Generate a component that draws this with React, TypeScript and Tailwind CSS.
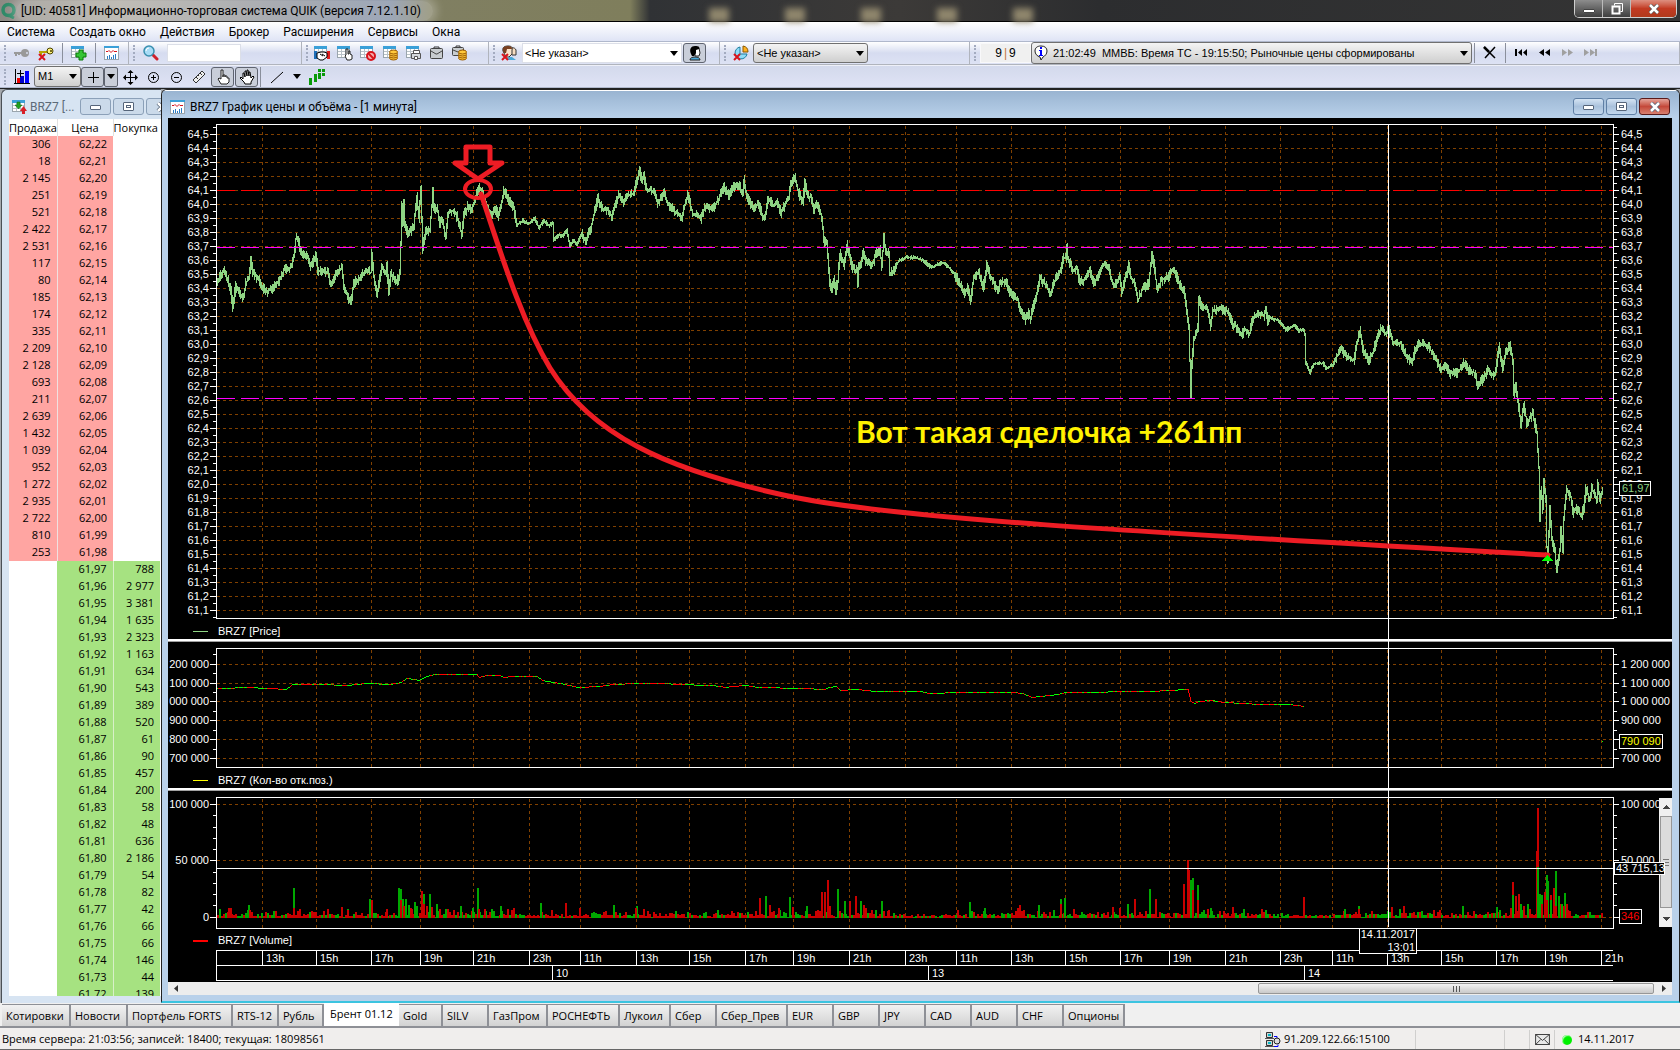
import React, { useState } from "react";

type Point = [number, number];

//market depth
const ASKS = [
  ["306", "62,22"], ["18", "62,21"], ["2 145", "62,20"], ["251", "62,19"], ["521", "62,18"],
  ["2 422", "62,17"], ["2 531", "62,16"], ["117", "62,15"], ["80", "62,14"], ["185", "62,13"],
  ["174", "62,12"], ["335", "62,11"], ["2 209", "62,10"], ["2 128", "62,09"], ["693", "62,08"],
  ["211", "62,07"], ["2 639", "62,06"], ["1 432", "62,05"], ["1 039", "62,04"], ["952", "62,03"],
  ["1 272", "62,02"], ["2 935", "62,01"], ["2 722", "62,00"], ["810", "61,99"], ["253", "61,98"],
];

const BIDS = [
  ["61,97", "788"], ["61,96", "2 977"], ["61,95", "3 381"], ["61,94", "1 635"], ["61,93", "2 323"],
  ["61,92", "1 163"], ["61,91", "634"], ["61,90", "543"], ["61,89", "389"], ["61,88", "520"],
  ["61,87", "61"], ["61,86", "90"], ["61,85", "457"], ["61,84", "200"], ["61,83", "58"],
  ["61,82", "48"], ["61,81", "636"], ["61,80", "2 186"], ["61,79", "54"], ["61,78", "82"],
  ["61,77", "42"], ["61,76", "66"], ["61,75", "66"], ["61,74", "146"], ["61,73", "44"],
  ["61,72", "139"],
];

const MENU = ["Система", "Создать окно", "Действия", "Брокер", "Расширения", "Сервисы", "Окна"];

const TABS = [
  { name: "Котировки", width: "w-[69px]" },
  { name: "Новости", width: "w-[57px]" },
  { name: "Портфель FORTS", width: "w-[105px]" },
  { name: "RTS-12", width: "w-[46px]" },
  { name: "Рубль", width: "w-[45px]" },
  { name: "Брент 01.12", width: "w-[75px]" },
  { name: "Gold", width: "w-[44px]" },
  { name: "SILV", width: "w-[46px]" },
  { name: "ГазПром", width: "w-[59px]" },
  { name: "РОСНЕФТЬ", width: "w-[72px]" },
  { name: "Лукоил", width: "w-[51px]" },
  { name: "Сбер", width: "w-[46px]" },
  { name: "Сбер_Прев", width: "w-[71px]" },
  { name: "EUR", width: "w-[46px]" },
  { name: "GBP", width: "w-[46px]" },
  { name: "JPY", width: "w-[46px]" },
  { name: "CAD", width: "w-[46px]" },
  { name: "AUD", width: "w-[46px]" },
  { name: "CHF", width: "w-[46px]" },
  { name: "Опционы", width: "w-[61px]" },
];

//hour marks on the time axis
const HOURS: [number, string][] = [
  [262, "13h"], [316, "15h"], [371, "17h"], [420, "19h"], [473, "21h"], [529, "23h"],
  [580, "11h"], [636, "13h"], [689, "15h"], [745, "17h"], [793, "19h"], [849, "21h"], [905, "23h"],
  [956, "11h"], [1011, "13h"], [1065, "15h"], [1120, "17h"], [1169, "19h"], [1225, "21h"], [1280, "23h"],
  [1332, "11h"], [1387, "13h"], [1441, "15h"], [1496, "17h"], [1545, "19h"], [1601, "21h"],
];

const DAYS: [number, string][] = [[552, "10"], [928, "13"], [1304, "14"]];

const PRICE: Point[] = [
  [217, 282], [220, 273], [223, 270], [227, 280], [230, 290], [232, 307], [235, 285], [239, 292], [242, 298],
  [245, 283], [248, 277], [250, 260], [252, 273], [257, 278], [262, 288], [267, 291], [273, 287], [280, 277],
  [283, 270], [290, 267], [293, 257], [295, 238], [297, 238], [300, 252], [307, 257], [310, 265], [315, 255],
  [317, 270], [327, 272], [330, 285], [333, 278], [337, 270], [341, 268], [343, 287], [350, 302], [353, 282],
  [360, 277], [365, 270], [370, 272], [371, 253], [373, 277], [376, 295], [378, 283], [381, 268], [385, 273],
  [386, 263], [388, 293], [390, 273], [396, 282], [399, 273], [400, 243], [401, 205], [402, 223], [403, 204],
  [404, 223], [407, 235], [413, 225], [416, 195], [418, 218], [420, 186], [421, 220], [422, 248], [425, 230],
  [429, 230], [432, 191], [433, 207], [437, 210], [439, 225], [441, 218], [445, 238], [447, 213], [453, 210],
  [457, 218], [461, 235], [463, 215], [467, 206], [470, 210], [474, 200], [478, 186], [482, 193], [485, 203],
  [490, 218], [495, 207], [497, 216], [500, 207], [503, 189], [505, 193], [510, 203], [513, 207], [516, 225],
  [522, 220], [528, 223], [534, 218], [538, 227], [543, 220], [548, 225], [552, 223], [553, 240], [557, 235],
  [562, 235], [566, 230], [569, 245], [573, 240], [576, 244], [581, 232], [585, 242], [590, 227], [597, 198],
  [602, 210], [607, 208], [611, 216], [615, 203], [618, 195], [623, 202], [627, 195], [633, 193], [636, 180],
  [639, 171], [641, 180], [643, 175], [646, 190], [653, 190], [657, 202], [663, 193], [667, 203], [673, 210],
  [681, 217], [684, 205], [687, 195], [692, 213], [700, 218], [704, 207], [712, 208], [718, 198], [723, 187],
  [728, 195], [732, 187], [738, 185], [742, 193], [743, 179], [744, 188], [748, 200], [753, 208], [758, 203],
  [762, 217], [764, 218], [767, 197], [772, 205], [777, 202], [780, 213], [785, 202], [788, 197], [790, 182],
  [794, 177], [797, 190], [802, 203], [804, 183], [807, 195], [810, 197], [813, 210], [817, 203], [821, 217],
  [823, 240], [826, 243], [827, 257], [829, 283], [831, 288], [833, 280], [835, 290], [837, 280], [839, 253],
  [843, 265], [846, 245], [848, 252], [852, 268], [856, 270], [857, 285], [858, 265], [861, 260], [862, 250],
  [865, 260], [870, 265], [873, 260], [875, 252], [879, 250], [881, 265], [883, 236], [885, 253], [888, 253],
  [889, 273], [893, 270], [898, 260], [905, 257], [913, 257], [923, 260], [930, 267], [942, 262], [948, 267],
  [953, 273], [957, 280], [963, 292], [967, 287], [970, 300], [973, 275], [978, 273], [983, 287], [985, 273],
  [986, 263], [988, 272], [993, 283], [997, 290], [999, 282], [1005, 280], [1008, 290], [1017, 300], [1020, 312],
  [1024, 319], [1027, 313], [1030, 318], [1032, 307], [1037, 290], [1039, 277], [1043, 282], [1050, 293],
  [1055, 278], [1060, 270], [1062, 258], [1065, 257], [1066, 247], [1067, 257], [1072, 270], [1076, 267],
  [1079, 282], [1085, 278], [1089, 270], [1093, 282], [1098, 275], [1102, 265], [1107, 265], [1110, 277],
  [1113, 287], [1119, 275], [1121, 291], [1124, 280], [1128, 265], [1130, 277], [1134, 283], [1137, 300],
  [1142, 288], [1148, 283], [1151, 253], [1153, 263], [1156, 287], [1161, 280], [1168, 275], [1173, 268],
  [1178, 283], [1183, 290], [1186, 310], [1188, 327], [1190, 394], [1191, 363], [1193, 340], [1197, 327],
  [1198, 300], [1202, 307], [1206, 308], [1210, 325], [1212, 310], [1218, 308], [1228, 312], [1231, 323],
  [1237, 328], [1241, 335], [1244, 328], [1249, 333], [1251, 320], [1257, 313], [1263, 315], [1265, 307],
  [1267, 322], [1269, 317], [1279, 321], [1285, 329], [1294, 325], [1298, 330], [1303, 329], [1304, 333],
  [1305, 362], [1309, 372], [1313, 363], [1322, 363], [1326, 368], [1333, 363], [1340, 347], [1345, 355],
  [1353, 360], [1356, 343], [1359, 330], [1362, 350], [1368, 360], [1373, 350], [1376, 337], [1380, 328],
  [1385, 333], [1388, 328], [1392, 343], [1400, 343], [1405, 355], [1411, 363], [1415, 347], [1419, 343],
  [1427, 345], [1433, 355], [1440, 368], [1444, 365], [1449, 373], [1457, 372], [1463, 363], [1470, 372],
  [1474, 372], [1477, 385], [1481, 380], [1487, 370], [1494, 375], [1498, 347], [1502, 367], [1505, 352],
  [1509, 344], [1512, 360], [1513, 395], [1515, 382], [1517, 400], [1520, 423], [1523, 405], [1526, 422],
  [1529, 418], [1532, 413], [1536, 433], [1538, 467], [1539, 520], [1540, 490], [1542, 508], [1543, 480],
  [1545, 500], [1546, 547], [1547, 560], [1549, 508], [1551, 540], [1554, 550], [1556, 570], [1559, 550],
  [1560, 530], [1562, 550], [1563, 517], [1566, 490], [1570, 497], [1572, 513], [1575, 508], [1581, 515],
  [1583, 507], [1585, 488], [1589, 500], [1591, 488], [1596, 498], [1597, 484], [1599, 499], [1602, 490],
];

const OPEN_INTEREST: Point[] = [
  [217, 688], [223, 688], [247, 687], [268, 688], [287, 689], [293, 684], [320, 684], [347, 685], [367, 683],
  [390, 684], [402, 682], [407, 678], [420, 680], [427, 676], [435, 674], [477, 674], [479, 677], [487, 675],
  [500, 675], [503, 677], [513, 676], [537, 676], [542, 680], [553, 682], [560, 683], [578, 687], [600, 686],
  [614, 684], [637, 683], [664, 683], [678, 684], [710, 685], [722, 686], [724, 687], [745, 685], [758, 687],
  [802, 688], [825, 689], [830, 687], [836, 686], [840, 690], [857, 689], [875, 691], [921, 691], [928, 693],
  [963, 692], [1013, 692], [1022, 693], [1032, 697], [1059, 694], [1066, 692], [1151, 691], [1188, 689],
  [1191, 701], [1195, 703], [1199, 701], [1211, 700], [1224, 702], [1243, 703], [1261, 704], [1289, 704],
  [1304, 706],
];

//x, height, color
const SPIKES: [number, number, "r" | "g"][] = [
  [220, 9, "g"], [229, 10, "r"], [231, 10, "r"], [249, 13, "g"], [250, 8, "r"], [294, 30, "g"], [294, 10, "r"],
  [300, 9, "r"], [328, 9, "r"], [342, 11, "r"], [348, 8, "r"], [370, 19, "g"], [372, 18, "r"], [387, 9, "r"],
  [399, 30, "g"], [401, 29, "g"], [401, 18, "r"], [403, 19, "g"], [404, 12, "r"], [406, 19, "g"], [409, 13, "g"],
  [411, 10, "r"], [415, 16, "g"], [417, 12, "g"], [422, 27, "r"], [424, 24, "g"], [424, 14, "r"], [427, 12, "r"],
  [430, 24, "g"], [432, 11, "r"], [437, 14, "g"], [440, 9, "r"], [461, 12, "g"], [473, 10, "g"], [478, 30, "g"],
  [479, 9, "r"], [485, 9, "r"], [501, 12, "g"], [514, 10, "r"], [541, 15, "g"], [566, 15, "r"], [552, 8, "r"],
  [580, 10, "r"], [614, 13, "g"], [637, 12, "g"], [636, 10, "r"], [760, 20, "r"], [766, 22, "g"], [770, 13, "r"],
  [779, 10, "r"], [790, 21, "g"], [793, 11, "r"], [807, 12, "g"], [822, 26, "r"], [825, 26, "r"], [828, 38, "r"],
  [830, 12, "r"], [838, 29, "g"], [845, 17, "g"], [850, 17, "r"], [856, 22, "r"], [861, 17, "g"], [864, 13, "r"],
  [882, 17, "g"], [889, 8, "r"], [970, 16, "g"], [985, 10, "g"], [1018, 10, "r"], [1020, 13, "r"], [1039, 13, "g"],
  [1061, 19, "g"], [1061, 14, "r"], [1065, 20, "g"], [1113, 11, "r"], [1120, 10, "r"], [1128, 14, "g"],
  [1135, 19, "r"], [1150, 29, "g"], [1156, 19, "r"], [1184, 34, "r"], [1188, 58, "r"], [1189, 48, "r"],
  [1191, 38, "g"], [1193, 40, "g"], [1193, 28, "r"], [1198, 33, "g"], [1198, 18, "r"], [1204, 8, "g"],
  [1211, 10, "g"], [1233, 11, "r"], [1266, 8, "g"], [1304, 21, "r"], [1345, 9, "g"], [1359, 12, "g"],
  [1359, 9, "r"], [1392, 11, "r"], [1404, 12, "r"], [1438, 6, "r"], [1463, 12, "g"], [1497, 11, "g"],
  [1511, 10, "r"], [1513, 36, "r"], [1513, 23, "g"], [1516, 22, "r"], [1519, 24, "r"], [1521, 14, "g"],
  [1524, 12, "r"], [1528, 14, "g"], [1537, 67, "r"], [1538, 110, "r"], [1538, 51, "g"], [1540, 24, "g"],
  [1542, 23, "g"], [1542, 14, "r"], [1545, 26, "r"], [1547, 43, "g"], [1548, 37, "g"], [1547, 18, "r"],
  [1551, 23, "r"], [1551, 18, "g"], [1554, 30, "r"], [1556, 47, "g"], [1556, 12, "r"], [1559, 22, "g"],
  [1561, 14, "r"], [1562, 14, "g"], [1565, 25, "g"], [1567, 14, "r"], [1564, 12, "r"],
];

const makeRandom = (seed: number) => () => {
  seed = (seed * 1103515245 + 12345) % 2147483648;
  return seed / 2147483648;
};

const valueAt = (points: Point[], x: number) => {
  for (let i = 1; i < points.length; i++) {
    const [x0, y0] = points[i - 1];
    const [x1, y1] = points[i];
    if (x <= x1) return y0 + ((y1 - y0) * (x - x0)) / (x1 - x0);
  }
  return points[points.length - 1][1];
};

//evening sessions trade in a narrow range
const isCalm = (x: number) =>
  (x > 515 && x < 582) || (x > 897 && x < 955) || (x > 1268 && x < 1334);

const buildPricePath = () => {
  const rnd = makeRandom(17);
  let d = "";
  let prev = valueAt(PRICE, 217);
  for (let x = 217; x <= 1602; x++) {
    const y = valueAt(PRICE, x);
    const amp = isCalm(x) ? 2 : 5;
    const top = Math.round(Math.min(y, prev) - rnd() * amp);
    const bottom = Math.round(Math.max(y, prev) + rnd() * amp);
    d += `M${x} ${top}h1V${bottom + 1}h-1z`;
    prev = y;
  }
  return d;
};

const buildOpenInterest = () => {
  const rnd = makeRandom(5);
  let green = "";
  let red = "";
  let isRed = false;
  for (let x = 217; x < 1304; x++) {
    if (rnd() < 0.3) isRed = !isRed;
    const y = Math.round(valueAt(OPEN_INTEREST, x));
    const next = Math.round(valueAt(OPEN_INTEREST, x + 1));
    const cell = `M${x} ${Math.min(y, next)}h1v${Math.max(1, Math.abs(next - y))}h-1z`;
    if (isRed || next - y > 1) red += cell;
    else green += cell;
  }
  return { green, red };
};

const buildVolume = () => {
  const rnd = makeRandom(91);
  let green = "";
  let red = "";
  for (let x = 217; x < 1602; x += 2) {
    const max = isCalm(x) ? 3 : 8;
    const h = 1 + Math.round(rnd() * rnd() * max + rnd() * 2);
    const cell = `M${x} ${918 - h}h2v${h}h-2z`;
    if (rnd() > 0.42) red += cell;
    else green += cell;
  }
  return { green, red };
};

const PRICE_PATH = buildPricePath();
const OI_PATHS = buildOpenInterest();
const VOLUME_PATHS = buildVolume();

const range = (n: number) => Array.from({ length: n }, (_, i) => i);

const PRICE_LEVELS = range(35).map((i) => ({
  y: 134 + i * 14,
  label: ((645 - i) / 10).toFixed(1).replace(".", ","),
}));

const OI_LEVELS = [
  { y: 664, left: "200 000", right: "1 200 000" },
  { y: 683, left: "100 000", right: "1 100 000" },
  { y: 701, left: "000 000", right: "1 000 000" },
  { y: 720, left: "900 000", right: "900 000" },
  { y: 739, left: "800 000", right: "" },
  { y: 758, left: "700 000", right: "700 000" },
];

const VOLUME_LEVELS = [
  { y: 804, left: "100 000", right: "100 000" },
  { y: 860, left: "50 000", right: "50 000" },
  { y: 917, left: "0", right: "" },
];

const MINOR_TICKS = [
  ...range(36).map((i) => 127 + i * 14),
  654, 673, 692, 711, 730, 749,
  815, 827, 838, 849, 872, 883, 894, 905,
];

const PANELS = [
  { top: 124, bottom: 618 },
  { top: 648, bottom: 767 },
  { top: 797, bottom: 928 },
];

const Legend = ({ y, color, text, thick }: { y: number; color: string; text: string; thick?: boolean }) => (
  <g>
    <rect x={193} y={y} width={15} height={thick ? 2 : 1} fill={color} />
    <text x={218} y={y + 4} fill="#fff">{text}</text>
  </g>
);

const Chart = () => (
  <svg
    className="block h-full w-full bg-black text-[11px]"
    viewBox="168 118 1504 864"
    shapeRendering="crispEdges"
    fontFamily="'Liberation Sans', Arial, sans-serif"
    role="img"
    aria-label="BRZ7 График цены и объёма"
  >
    {/* grid */}
    <g stroke="#804000" strokeDasharray="3 3">
      {[...PRICE_LEVELS, ...OI_LEVELS, ...VOLUME_LEVELS].map(({ y }) => (
        <line key={y} x1={217} x2={1613} y1={y + 0.5} y2={y + 0.5} />
      ))}
      {HOURS.map(([x]) =>
        PANELS.map(({ top, bottom }) => (
          <line key={`${x}-${top}`} x1={x + 0.5} x2={x + 0.5} y1={top + 2} y2={bottom} />
        ))
      )}
    </g>

    {/* levels */}
    <path d="M217 190.5H1613" stroke="#f00" strokeDasharray="18 6" />
    <path d={PRICE_PATH} fill="#8fd584" />
    <path d="M217 247.5H1613M217 398.5H1613" stroke="#f0f" strokeDasharray="18 6" />

    <path d={OI_PATHS.green} fill="#0f0" />
    <path d={OI_PATHS.red} fill="#f00" />
    <rect x={1602} y={741} width={1} height={1} fill="#0f0" />

    <path d={VOLUME_PATHS.green} fill="#00a800" />
    <path d={VOLUME_PATHS.red} fill="#c80000" />
    {SPIKES.map(([x, h, c], i) => (
      <rect key={i} x={x - 1} y={918 - h} width={2} height={h} fill={c === "r" ? "#c80000" : "#00a800"} />
    ))}

    {/* frames and ticks */}
    <g stroke="#fff" fill="none">
      {PANELS.map(({ top, bottom }) => (
        <rect key={top} x={216.5} y={top + 0.5} width={1397} height={bottom - top} />
      ))}
      {[...PRICE_LEVELS, ...OI_LEVELS, ...VOLUME_LEVELS].map(({ y }) => (
        <path key={y} d={`M210 ${y + 0.5}h6M1614 ${y + 0.5}h5`} />
      ))}
      {MINOR_TICKS.map((y) => (
        <path key={y} d={`M213 ${y + 0.5}h3M1614 ${y + 0.5}h3`} />
      ))}
      <path d="M216.5 950V980.5M216 950.5H1613M216 965.5H1613M216 980.5H1613" />
      {HOURS.map(([x]) => (
        <path key={x} d={`M${x + 0.5} 950v15`} />
      ))}
      {DAYS.map(([x]) => (
        <path key={x} d={`M${x + 0.5} 965v15`} />
      ))}
    </g>

    {/* axis labels */}
    <g fill="#fff">
      {PRICE_LEVELS.map(({ y, label }) => (
        <React.Fragment key={y}>
          <text x={209} y={y + 4} textAnchor="end">{label}</text>
          <text x={1621} y={y + 4}>{label}</text>
        </React.Fragment>
      ))}
      {[...OI_LEVELS, ...VOLUME_LEVELS].map(({ y, left, right }) => (
        <React.Fragment key={y}>
          <text x={209} y={y + 4} textAnchor="end">{left}</text>
          {right && <text x={1621} y={y + 4}>{right}</text>}
        </React.Fragment>
      ))}
      {HOURS.map(([x, label]) => (
        <text key={x} x={x + 4} y={962}>{label}</text>
      ))}
      {DAYS.map(([x, label]) => (
        <text key={x} x={x + 4} y={977}>{label}</text>
      ))}
    </g>

    <Legend y={631} color="#8fd584" text="BRZ7 [Price]" />
    <Legend y={780} color="#ff0" text="BRZ7 (Кол-во отк.поз.)" />
    <Legend y={940} color="#f00" text="BRZ7 [Volume]" thick />

    {/* panel splitters */}
    {[639, 788].map((y) => (
      <g key={y}>
        <rect x={168} y={y} width={1504} height={2} fill="#fff" />
        <rect x={168} y={y + 2} width={1504} height={1} fill="#a0a0a0" />
      </g>
    ))}

    {/* vertical scrollbar of the volume panel */}
    <g>
      <rect x={1659} y={798} width={13} height={129} fill="#f0f0f0" />
      <rect x={1660.5} y={816.5} width={11} height={91} fill="#dcdcdc" stroke="#979797" />
      <path d="M1662 809l4-4 4 4zM1662 917l4 4 4-4z" fill="#444" />
      <path d="M1663 859.5h6M1663 862.5h6M1663 865.5h6" stroke="#777" />
    </g>

    {/* crosshair */}
    <path d="M1388.5 125V927M216 868.5H1613" stroke="#fff" />
    <g fill="#000" stroke="#fff">
      <rect x={1359.5} y={928.5} width={57} height={25} />
      <rect x={1614.5} y={862.5} width={50} height={12} />
      <rect x={1619.5} y={481.5} width={31} height={14} />
      <rect x={1619.5} y={734.5} width={43} height={14} />
      <rect x={1619.5} y={909.5} width={22} height={14} />
    </g>
    <g fill="#fff">
      <text x={1415} y={938} textAnchor="end">14.11.2017</text>
      <text x={1415} y={951} textAnchor="end">13:01</text>
      <text x={1616} y={872}>43 715,13</text>
      <text x={1622} y={492} fill="#8fd584">61,97</text>
      <text x={1621} y={745} fill="#ff0">790 090</text>
      <text x={1621} y={920} fill="#f00">346</text>
    </g>

    {/* deal notes */}
    <g fill="none" stroke="#ed1c24" shapeRendering="auto">
      <path
        d="M466 147H490V163H502L478 179L455 163H466Z"
        strokeWidth={5}
        strokeLinejoin="round"
      />
      <ellipse cx={478} cy={189} rx={13} ry={9} strokeWidth={4} />
      <path
        d="M481 194C500 250 520 318 550 368C590 432 660 470 798 498C900 518 1100 530 1548 555"
        strokeWidth={5}
        strokeLinecap="round"
      />
    </g>
    <path d="M1541 561L1547 555L1554 561Z" fill="#0f0" />
    <text
      x={856}
      y={443}
      fill="#fff200"
      className="text-[30px] font-bold"
      fontFamily="Lato, 'Open Sans', sans-serif"
    >
      Вот такая сделочка +261пп
    </text>
  </svg>
);

//toolbar icons
const Icon = ({ children, size = 16 }: { children: React.ReactNode; size?: number }) => (
  <svg width={size} height={size} viewBox="0 0 16 16" className="block shrink-0" aria-hidden="true">
    {children}
  </svg>
);

const TableSheet = () => (
  <g>
    <rect x="0.5" y="1.5" width="12" height="11" fill="#fff" stroke="#9aa5ad" />
    <path d="M0 1h13v3H0z" fill="#3aa0d8" />
    <path d="M1 6.5h11M1 9.5h11M4.5 4v8M8.5 4v8" stroke="#b9c2c8" />
  </g>
);

const RedCross = () => <path d="M1 9l6 6M7 9l-6 6" stroke="#d8141c" strokeWidth="2" />;

const KeyIcon = ({ off }: { off?: boolean }) => (
  <Icon>
    <path
      d={off ? "M8 8H0M2 8v3M5 8v2" : "M9 7H1M3 8v2"}
      stroke={off ? "#999" : "#b8a400"}
      strokeWidth="2"
      fill="none"
    />
    {off ? (
      <circle cx="11" cy="8" r="4" fill="#999" />
    ) : (
      <circle cx="12" cy="6" r="3" fill="#fff27a" stroke="#4b4200" />
    )}
    <circle cx="13" cy={off ? 8 : 6} r="1" fill={off ? "#d8dcec" : "#4b4200"} />
    {!off && <RedCross />}
  </Icon>
);

const ChartIcon = () => (
  <Icon>
    <rect x="0.5" y="1.5" width="14" height="13" fill="#fff" stroke="#9aa5ad" />
    <path d="M0 1h15v2H0z" fill="#3aa0d8" />
    <path d="M2 6.5h2l1-1 2 2 2-2 1 1h3" stroke="#d8141c" fill="none" />
    <path d="M3.5 14v-3M5.5 14v-4M7.5 14v-2M9.5 14v-4M11.5 14v-5" stroke="#2b7cc4" />
  </Icon>
);

const AddTableIcon = () => (
  <Icon>
    <TableSheet />
    <path d="M8 5h4v3h3v4h-3v3H8v-3H5V8h3z" fill="#35c435" stroke="#0b7a0b" />
  </Icon>
);

const SearchIcon = () => (
  <Icon>
    <path d="M10 10l4 4" stroke="#d0202a" strokeWidth="3" strokeLinecap="round" />
    <circle cx="6" cy="6" r="5" fill="#a8dcf6" stroke="#3a8fae" strokeWidth="1.5" />
    <path d="M3 6a3 3 0 0 1 3-3" stroke="#fff" fill="none" />
  </Icon>
);

const DealIcon = () => (
  <Icon>
    <TableSheet />
    <path d="M0 6h3v8H0z" fill="#1f6fb8" />
    <path d="M13 6h3v8h-3z" fill="#e02020" />
    <path d="M3 8l4-1 3 0 3 1v4l-4 3-3 0-3-2z" fill="#fff" stroke="#000" />
    <path d="M6 9l3 2M8 9l3 2" stroke="#000" />
  </Icon>
);

const HandTableIcon = () => (
  <Icon>
    <TableSheet />
    <path d="M8 11l1-1V4h2v5h1V6h1v3l2 1v4l-2 1h-3z" fill="#fff" stroke="#222" strokeLinejoin="round" />
  </Icon>
);

const StopTableIcon = () => (
  <Icon>
    <TableSheet />
    <circle cx="11" cy="11" r="4" fill="#f4b0b0" stroke="#d8141c" strokeWidth="2" />
    <path d="M8 8l6 6" stroke="#d8141c" strokeWidth="2" />
  </Icon>
);

const Coins = () => (
  <g fill="#ffc83a" stroke="#9a5a00">
    <ellipse cx="10.5" cy="13" rx="4" ry="2" />
    <ellipse cx="10.5" cy="11" rx="4" ry="2" />
    <ellipse cx="10.5" cy="9" rx="4" ry="2" />
    <ellipse cx="10.5" cy="7" rx="4" ry="2" />
  </g>
);

const CoinTableIcon = () => (
  <Icon>
    <TableSheet />
    <Coins />
  </Icon>
);

const PrintTableIcon = () => (
  <Icon>
    <TableSheet />
    <path d="M7.5 5.5h6v4h-6z" fill="#fff" stroke="#555" />
    <path d="M5.5 8.5h9v5h-9z" fill="#d5d9dc" stroke="#555" />
    <path d="M8.5 11.5h3v3h-3z" fill="#fff" stroke="#555" />
  </Icon>
);

const BriefcaseIcon = () => (
  <Icon>
    <path d="M5 4V2h5v2" stroke="#333" fill="none" />
    <rect x="1.5" y="3.5" width="12" height="10" rx="1" fill="#c8cccf" stroke="#444" />
    <path d="M2 6l5 3h1l5-3" stroke="#444" fill="none" />
  </Icon>
);

const CoinBriefcaseIcon = () => (
  <Icon>
    <path d="M4 2V1h4v1" stroke="#333" fill="none" />
    <rect x="0.5" y="2.5" width="11" height="8" rx="1" fill="#c8cccf" stroke="#444" />
    <path d="M1 5l5 2 5-2" stroke="#444" fill="none" />
    <Coins />
  </Icon>
);

const ClientsIcon = () => (
  <Icon>
    <path d="M9 5c0-3 5-3 6 0v5h-4z" fill="#f7dcc0" stroke="#333" />
    <path d="M2 6c-1-4 2-5 5-5s5 1 4 4v4l-3 3H5z" fill="#fbe3cb" stroke="#333" />
    <path d="M2 6c-1-4 2-5 5-5s4 1 4 3H6L5 8H3z" fill="#7a4020" />
    <path d="M6 15l2-3h3l4 3z" fill="#4aa8d8" />
    <RedCross />
  </Icon>
);

const HeadIcon = () => (
  <Icon>
    <path d="M8 3h4l1 5-1 3H8z" fill="#fff" stroke="#222" />
    <path d="M4 9C2 4 4 1 8 1s5 1 4 3L9 5v3l-2 3H5z" fill="#000" />
    <path d="M3 15c0-2 2-3 5-3s5 1 5 3z" fill="#4aa8d8" stroke="#222" />
  </Icon>
);

const PieIcon = () => (
  <Icon>
    <path d="M7 2a6 6 0 1 0 7 7H7z" fill="#8fdcf8" stroke="#1f7f9f" />
    <path d="M10 1a6 6 0 0 1 5 6h-5z" fill="#ffb020" stroke="#8a5a00" />
    <RedCross />
  </Icon>
);

const InfoIcon = () => (
  <Icon>
    <path d="M8 1c4 0 6 2 6 5s-2 5-4 6l-2 3-1-3C4 11 2 9 2 6s2-5 6-5z" fill="#fff" stroke="#222" />
    <path d="M7 2h2v2H7zM6 5h3v5h1v1H6v-1h1V6H6z" fill="#00f" />
  </Icon>
);

const HandIcon = ({ open }: { open?: boolean }) => (
  <Icon>
    {open ? (
      <path
        d="M4 10V4h1l1 4V2h1l1 5V1h1l1 6V3h1l1 6 2-2 1 1-3 5v2H6l-1-2-4-4 1-1z"
        fill="#fff" stroke="#000" strokeLinejoin="round"
      />
    ) : (
      <path
        d="M6 10V1h2v7V6h2v2V7h2v2h2v4l-2 2H6L3 10l1-1z"
        fill="#fff" stroke="#222" strokeLinejoin="round"
      />
    )}
  </Icon>
);

const DepthIcon = () => (
  <Icon>
    <TableSheet />
    <path d="M5 3h3v3h2l-3.5 4L3 6h2z" fill="#20a020" stroke="#0b6a0b" strokeWidth="0.5" />
    <path d="M10 15v-3H8l3.5-5 3.5 5h-2v3z" fill="#d82028" />
  </Icon>
);

const Caret = () => (
  <svg width="8" height="5" viewBox="0 0 8 5" className="block" aria-hidden="true">
    <path d="M0 0h8L4 5z" fill="#000" />
  </svg>
);

const Grip = () => <span className="h-4 w-[2px] border-l-2 border-dotted border-[#a3abc0]" />;
const Divider = () => <span className="h-5 w-px bg-[#8a8f9c]" />;

const ToolButton = ({ label, children, pressed }: { label: string; children: React.ReactNode; pressed?: boolean }) => (
  <button
    aria-label={label}
    className={
      pressed
        ? "flex h-5 w-[23px] items-center justify-center rounded-[3px] border border-[#5f6470] bg-[#c9ced9]"
        : "flex h-5 w-4 items-center justify-center"
    }
  >
    {children}
  </button>
);

const Band = ({ className, children }: { className: string; children: React.ReactNode }) => (
  <div
    className={`flex h-[23px] shrink-0 items-center border-r border-b border-[#b0b4bd] bg-gradient-to-b from-white via-[#d6dcf0] to-[#dde2f4] pl-1 ${className}`}
  >
    {children}
  </div>
);

const Combo = ({ label, value, className }: { label: string; value: string; className: string }) => (
  <div className="relative flex shrink-0 items-center">
    <select aria-label={label} className={`appearance-none font-[Liberation_Sans,Arial,sans-serif] text-[11px] text-black ${className}`}>
      <option>{value}</option>
    </select>
    <span className="pointer-events-none absolute right-1">
      <Caret />
    </span>
  </div>
);

const TitleBar = () => (
  <header className="flex h-[22px] shrink-0 items-start border-b border-black bg-[linear-gradient(to_right,#8d8a84_0px,#aaa69d_120px,#8a8f98_290px,#7d8aa0_390px,#807f62_430px,#7f7e5c_630px,#303235_650px,#3c3a38_900px,#2c2d2f_1100px,#343434_100%)]">
    <div className="flex h-[21px] shrink-0 items-center pl-px">
      <svg width="15" height="17" viewBox="0 0 15 17" aria-hidden="true">
        <circle cx="7.5" cy="8" r="5.5" fill="none" stroke="#2f8a68" strokeWidth="3.5" />
        <path d="M7 13l6 3" stroke="#2f8a68" strokeWidth="3" />
      </svg>
      <h1 className="rounded-full bg-white/25 pr-3 pl-[5px] font-[Roboto,sans-serif] text-[12px] leading-5 text-black shadow-[0_0_8px_4px_rgba(255,255,255,0.25)]">
        [UID: 40581] Информационно-торговая система QUIK (версия 7.12.1.10)
      </h1>
    </div>
    <div className="flex min-w-0 flex-1 gap-14 overflow-hidden pt-2 pl-[276px] blur-[3px]">
      {range(5).map((i) => (
        <span key={i} className="h-[14px] w-5 shrink-0 bg-[#8f866c]" />
      ))}
    </div>
    <div className="mr-[3px] flex h-[18px] overflow-hidden rounded-b-[5px] border border-t-0 border-[#cfcfcf]">
      <button aria-label="Свернуть" className="flex w-7 items-center justify-center border-r border-[#bbb] bg-gradient-to-b from-[#8d8d8d] to-[#3f3f3f]">
        <span className="mt-1 h-1 w-3 rounded-[1px] border border-[#444] bg-white" />
      </button>
      <button aria-label="Восстановить" className="flex w-7 items-center justify-center border-r border-[#bbb] bg-gradient-to-b from-[#8d8d8d] to-[#3f3f3f]">
        <svg width="12" height="12" viewBox="0 0 12 12" fill="none" stroke="#fff">
          <path d="M3.5 2.5v-2h8v8h-2" />
          <rect x="1.5" y="3.5" width="7" height="7" strokeWidth="2" />
        </svg>
      </button>
      <button aria-label="Закрыть" className="flex w-[45px] items-center justify-center bg-gradient-to-b from-[#dd8f80] via-[#c23a22] to-[#b03a1c]">
        <svg width="12" height="10" viewBox="0 0 12 10">
          <path d="M2 1l8 8M10 1l-8 8" stroke="#555" strokeWidth="4" />
          <path d="M2 1l8 8M10 1l-8 8" stroke="#fff" strokeWidth="2.5" />
        </svg>
      </button>
    </div>
  </header>
);

const MenuBar = () => (
  <nav className="flex h-5 shrink-0 items-center gap-[14px] border-b border-[#b0b8cc] bg-gradient-to-b from-white to-[#dfe4f5] pl-[7px] font-[Roboto,sans-serif] text-[12px]">
    {MENU.map((item) => (
      <button key={item}>{item}</button>
    ))}
  </nav>
);

const MainToolbar = () => (
  <div className="flex h-6 shrink-0 items-start bg-[#eef0f8]">
    <Band className="w-[129px]">
      <Grip />
      <span className="flex items-center gap-2 pl-2">
        <ToolButton label="Соединение"><KeyIcon off /></ToolButton>
        <ToolButton label="Разорвать"><KeyIcon /></ToolButton>
        <Divider />
        <ToolButton label="Новая таблица"><AddTableIcon /></ToolButton>
        <Divider />
        <ToolButton label="Новый график"><ChartIcon /></ToolButton>
      </span>
    </Band>
    <Band className="w-[173px]">
      <Grip />
      <span className="flex items-center gap-2 pl-2">
        <ToolButton label="Найти"><SearchIcon /></ToolButton>
        <input aria-label="Поиск" className="h-[18px] w-[74px] border border-[#dcdfe8] bg-white text-[11px]" />
      </span>
    </Band>
    <Band className="w-[187px]">
      <Grip />
      <span className="flex items-center gap-[7px] pl-[6px]">
        <ToolButton label="Сделки"><DealIcon /></ToolButton>
        <ToolButton label="Заявки"><HandTableIcon /></ToolButton>
        <ToolButton label="Стоп-заявки"><StopTableIcon /></ToolButton>
        <ToolButton label="Лимиты"><CoinTableIcon /></ToolButton>
        <ToolButton label="Печать"><PrintTableIcon /></ToolButton>
        <ToolButton label="Портфель"><BriefcaseIcon /></ToolButton>
        <ToolButton label="Клиентский портфель"><CoinBriefcaseIcon /></ToolButton>
      </span>
    </Band>
    <Band className="w-[231px]">
      <Grip />
      <span className="flex items-center gap-px pl-[6px]">
        <ToolButton label="Клиенты"><ClientsIcon /></ToolButton>
        <Combo label="Клиент" value="<Не указан>" className="ml-1 h-5 w-[160px] border border-[#dcdfe8] bg-white pl-[2px]" />
        <ToolButton label="Профиль" pressed><HeadIcon /></ToolButton>
      </span>
    </Band>
    <Band className="w-[250px]">
      <Grip />
      <span className="flex items-center gap-1 pl-[7px]">
        <ToolButton label="Счета"><PieIcon /></ToolButton>
        <Combo label="Счёт" value="<Не указан>" className="h-5 w-[115px] rounded-[3px] border border-[#707070] bg-gradient-to-b from-[#f4f4f4] to-[#cfcfcf] pl-[3px]" />
      </span>
    </Band>
    <Band className="min-w-0 flex-1">
      <Grip />
      <span className="flex items-center pl-1">
        <span className="flex h-5 w-[51px] items-center justify-center gap-[2px] border border-[#f8f8fa] bg-[#f0f0f0] font-[Liberation_Sans,Arial,sans-serif] text-[12px]">
          9<span className="text-[#c07840]">|</span>9
        </span>
        <span className="relative flex items-center">
          <Combo
            label="Сообщения"
            value={"21:02:49\u00a0\u00a0ММВБ: Время ТС - 19:15:50; Рыночные цены сформированы"}
            className="h-[22px] w-[441px] rounded-[3px] border border-[#707070] bg-gradient-to-b from-[#f4f4f4] to-[#cfcfcf] pl-[21px]"
          />
          <span className="pointer-events-none absolute left-[2px]"><InfoIcon /></span>
        </span>
        <span className="flex items-center gap-2 pl-[2px]">
          <Divider />
          <button aria-label="Удалить сообщение">
            <svg width="14" height="14" viewBox="0 0 14 14" className="block">
              <path d="M1 1l11 11M12 1L2 12" stroke="#000" strokeWidth="1.5" />
              <path d="M1 1l5 5" stroke="#000" strokeWidth="2.5" />
            </svg>
          </button>
          <Divider />
          <svg width="84" height="8" viewBox="0 0 84 8" className="block">
            <path d="M1 0h2v7H1zM8 0v7L4 3.5zM13 0v7L9 3.5zM30 0v7l-5-3.5zM36 0v7l-5-3.5z" fill="#000" />
            <path d="M48 0v7l5-3.5zM54 0v7l5-3.5zM70 0v7l5-3.5zM76 0v7l5-3.5zM81 0h2v7h-2z" fill="#a0a0a0" />
          </svg>
        </span>
      </span>
    </Band>
  </div>
);

const ChartToolbar = () => (
  <div className="flex h-[22px] shrink-0 items-center border-b border-[#b0b8cc] bg-gradient-to-b from-[#d3d9ec] to-[#dfe3f5] pl-1">
    <Grip />
    <span className="pr-1 pl-2">
      <Icon>
        <path d="M3 9h3v5H3z" fill="#e00" />
        <path d="M6 7h4v7H6z" fill="#00c" />
        <path d="M11 2h4v12h-4z" fill="#00f" />
        <path d="M1.5 0v15M0 14.5h16" stroke="#000" fill="none" />
        <path d="M3 4.5h7M6.5 1v7" stroke="#000" />
      </Icon>
    </span>
    <Combo label="Интервал" value="M1" className="h-[21px] w-[47px] rounded-[3px] border border-[#707070] bg-gradient-to-b from-[#f4f4f4] to-[#cfcfcf] pl-[3px]" />
    <ToolButton label="Перекрестие" pressed>
      <Icon><path d="M8.5 3v11M3 8.5h11" stroke="#000" /></Icon>
    </ToolButton>
    <button aria-label="Вид курсора" className="flex h-5 w-[14px] items-center justify-center rounded-[2px] border border-[#5f6470] bg-[#c9ced9]">
      <Caret />
    </button>
    <span className="flex items-center gap-[7px] pl-1">
      <ToolButton label="Переместить">
        <Icon>
          <path d="M8.5 2v12M2 8.5h13" stroke="#000" />
          <path d="M8.5 1l3 3h-6zM8.5 16l3-3h-6zM1 8.5l3-3v6zM16 8.5l-3-3v6z" fill="#000" />
        </Icon>
      </ToolButton>
      <ToolButton label="Увеличить">
        <Icon>
          <circle cx="8.5" cy="8.5" r="5" fill="none" stroke="#000" />
          <path d="M8.5 6v5M6 8.5h5" stroke="#000" />
        </Icon>
      </ToolButton>
      <ToolButton label="Уменьшить">
        <Icon>
          <circle cx="8.5" cy="8.5" r="5" fill="none" stroke="#000" />
          <path d="M6 8.5h5" stroke="#000" />
        </Icon>
      </ToolButton>
      <ToolButton label="Линейка">
        <Icon>
          <path d="M2 11l9-9 3 3-9 9z" fill="#eee" stroke="#333" />
          <path d="M5 8l2 2M7 6l1 1M9 4l2 2" stroke="#333" />
        </Icon>
      </ToolButton>
    </span>
    <span className="flex items-center gap-px pl-1">
      <ToolButton label="Выбор" pressed><HandIcon /></ToolButton>
      <ToolButton label="Прокрутка" pressed><HandIcon open /></ToolButton>
    </span>
    <span className="flex items-center gap-2 pl-[2px]">
      <Divider />
      <ToolButton label="Линия">
        <Icon><path d="M2 14L14 3" stroke="#000" /></Icon>
      </ToolButton>
      <Caret />
      <ToolButton label="Индикаторы">
        <Icon>
          <path d="M0 9h3v7H0zM5 5h3v8H5zM9 4h3v6H9zM9 0h3v3H9zM13 0h3v3h-3zM13 4h3v3h-3z" fill="#0a9a0a" />
        </Icon>
      </ToolButton>
    </span>
  </div>
);

const FrameButtons = ({ active }: { active?: boolean }) => {
  const base = active
    ? "border-[#5f7fa5] bg-gradient-to-b from-[#d4e3f3] via-[#a9c1dc] to-[#c3d8ee]"
    : "border-[#8ba0b8] bg-[#cbdaea]";
  return (
    <div className="flex shrink-0 gap-[2px]">
      <button aria-label="Свернуть" className={`flex h-[17px] w-[31px] items-center justify-center rounded-[3px] border ${base}`}>
        <span className="mt-[2px] h-[5px] w-[11px] rounded-[1px] border border-[#56657a] bg-white" />
      </button>
      <button aria-label="Развернуть" className={`flex h-[17px] w-[31px] items-center justify-center rounded-[3px] border ${base}`}>
        <span className="flex h-[9px] w-[11px] items-center justify-center rounded-[1px] border border-[#56657a] bg-white">
          <span className="h-[3px] w-[5px] border border-[#56657a]" />
        </span>
      </button>
      <button
        aria-label="Закрыть"
        className={`flex h-[17px] w-[31px] items-center justify-center rounded-[3px] border ${
          active ? "border-[#5a1a1a] bg-gradient-to-b from-[#e3a39a] via-[#c4483a] to-[#d88070]" : base
        }`}
      >
        <svg width="12" height="10" viewBox="0 0 12 10">
          <path d="M2 1l8 8M10 1l-8 8" stroke="#56657a" strokeWidth="4" />
          <path d="M2 1l8 8M10 1l-8 8" stroke="#fff" strokeWidth="2.5" />
        </svg>
      </button>
    </div>
  );
};

const DepthWindow = () => (
  <section className="ml-px flex w-[160px] shrink-0 flex-col overflow-hidden rounded-tl-[6px] border-t border-l border-[#4a5056] bg-[#d7e4f2] pb-[7px] pl-[7px]">
    <div className="flex h-[29px] w-[190px] shrink-0 items-center gap-[2px] pt-1 pl-[3px]">
      <DepthIcon />
      <h2 className="w-12 font-[Roboto,sans-serif] text-[12px] whitespace-nowrap text-[#5c6a78]">BRZ7 [...</h2>
      <FrameButtons />
    </div>
    <div className="min-h-0 flex-1 overflow-hidden bg-white">
      <table className="w-[151px] table-fixed border-collapse text-right text-[11px] leading-4">
        <thead>
          <tr className="h-[17px] leading-[17px]">
            <th className="w-12 overflow-hidden border-r border-[#e0e0e0] p-0 text-left font-normal whitespace-nowrap">Продажа</th>
            <th className="w-14 border-r border-[#e0e0e0] p-0 text-center font-normal">Цена</th>
            <th className="overflow-hidden p-0 text-left font-normal whitespace-nowrap">Покупка</th>
          </tr>
        </thead>
        <tbody>
          {ASKS.map(([qty, price]) => (
            <tr key={price} className="h-[17px] align-top">
              <td className="border-r border-[#f0e0e0] bg-[#ffa5a2] p-0 pr-[6px]">{qty}</td>
              <td className="bg-[#ffa5a2] p-0 pr-[6px]">{price}</td>
              <td className="p-0" />
            </tr>
          ))}
          {BIDS.map(([price, qty]) => (
            <tr key={price} className="h-[17px] align-top">
              <td className="p-0" />
              <td className="border-r border-[#d8f0c8] bg-[#a6e281] p-0 pr-[6px]">{price}</td>
              <td className="bg-[#a6e281] p-0 pr-[6px]">{qty}</td>
            </tr>
          ))}
        </tbody>
      </table>
    </div>
  </section>
);

const ChartWindow = () => (
  <section className="flex min-w-0 flex-1 flex-col overflow-hidden rounded-t-[6px] border border-b-2 border-[#222] border-b-[#3cc4e0] bg-[#b9d1ea] pr-[7px] pb-[6px] pl-[6px]">
    <div className="-mr-[7px] -ml-[6px] flex h-7 shrink-0 items-center gap-1 border-t border-white bg-gradient-to-b from-[#99b4d1] to-[#b9d1ea] pt-1 pr-[9px] pl-2">
      <ChartIcon />
      <h2 className="min-w-0 flex-1 truncate font-[Roboto,sans-serif] text-[12px] text-black">BRZ7 График цены и объёма - [1 минута]</h2>
      <FrameButtons active />
    </div>
    <div className="min-h-0 flex-1 bg-black">
      <Chart />
    </div>
    <div className="flex h-[13px] shrink-0 items-center bg-[#ededed] px-[6px]">
      <svg width="4" height="7" viewBox="0 0 4 7"><path d="M4 0v7L0 3.5z" fill="#333" /></svg>
      <span className="flex-1" />
      <span className="mr-[8px] flex h-[11px] w-[396px] items-center justify-center gap-[2px] rounded-[2px] border border-[#979797] bg-gradient-to-b from-[#f3f3f3] to-[#c9c9c9]">
        <span className="h-[6px] w-px bg-[#555]" />
        <span className="h-[6px] w-px bg-[#555]" />
        <span className="h-[6px] w-px bg-[#555]" />
      </span>
      <svg width="4" height="7" viewBox="0 0 4 7"><path d="M0 0v7L4 3.5z" fill="#333" /></svg>
    </div>
  </section>
);

const StatusBar = () => (
  <footer className="flex h-[22px] shrink-0 items-center border-b border-[#666] bg-[#f0eeed] pt-[2px] text-[11px]">
    <p className="flex-1 pl-[2px]">Время сервера: 21:03:56; записей: 18400; текущая: 18098561</p>
    <div className="flex h-full w-[155px] items-center gap-[3px] border-l border-[#d0cfce] pl-1">
      <Icon>
        <path d="M1.5 0.5h6v5h-6zM1.5 8.5h6v5h-6z" fill="#cfd4d4" stroke="#333" />
        <path d="M3 2h3v2H3zM3 10h3v2H3z" fill="#00b8c8" />
        <path d="M0 6.5h9M0 14.5h9" stroke="#555" />
        <path d="M9 4.5h3v2M9 14.5h4v-2" stroke="#00f" fill="none" />
        <circle cx="12" cy="9" r="3" fill="#ddd" stroke="#222" />
      </Icon>
      91.209.122.66:15100
    </div>
    <div className="h-full w-[89px] border-l border-[#d0cfce]" />
    <div className="h-full w-[25px] border-l border-[#d0cfce]" />
    <div className="flex h-full w-[25px] items-center border-l border-[#d0cfce] pl-[5px]">
      <svg width="15" height="11" viewBox="0 0 16 12" aria-label="Почта">
        <rect x="0.5" y="0.5" width="15" height="11" fill="#e8e8e8" stroke="#333" />
        <path d="M1 1l7 6 7-6M1 11l5-5M15 11l-5-5" stroke="#333" fill="none" />
      </svg>
    </div>
    <div className="flex h-full w-[126px] items-center gap-[6px] border-l border-[#d0cfce] pl-[7px]">
      <span className="size-[10px] rounded-full bg-[#00f000] shadow-[inset_1px_1px_1px_#b8ffb8]" />
      14.11.2017
    </div>
  </footer>
);

const App = () => {
  const [activeTab, setActiveTab] = useState<string>("Брент 01.12");

  return (
    <div className="flex h-screen flex-col overflow-hidden bg-[#f0f0f0] font-['Open_Sans','Noto_Sans',sans-serif] text-black">
      <TitleBar />
      <MenuBar />
      <MainToolbar />
      <ChartToolbar />
      <main className="flex min-h-0 flex-1 border-t border-[#222] bg-[#a5a9ae]">
        <DepthWindow />
        <ChartWindow />
      </main>
      <div className="flex h-[25px] shrink-0 items-end border-b-2 border-[#8e9096] bg-[#f0f0f0] pl-[2px] text-[11px]">
        {TABS.map((tab) => (
          <button
            key={tab.name}
            onClick={() => setActiveTab(tab.name)}
            className={`shrink-0 text-left whitespace-nowrap ${tab.width} ${
              tab.name === activeTab
                ? "h-[23px] bg-white pl-[6px]"
                : "h-[22px] border-t border-r-2 border-[#8e9096] bg-gradient-to-b from-[#f2f2f2] to-[#d2d2d2] pt-[2px] pl-1"
            }`}
          >
            {tab.name}
          </button>
        ))}
      </div>
      <StatusBar />
    </div>
  );
};

export default App;
